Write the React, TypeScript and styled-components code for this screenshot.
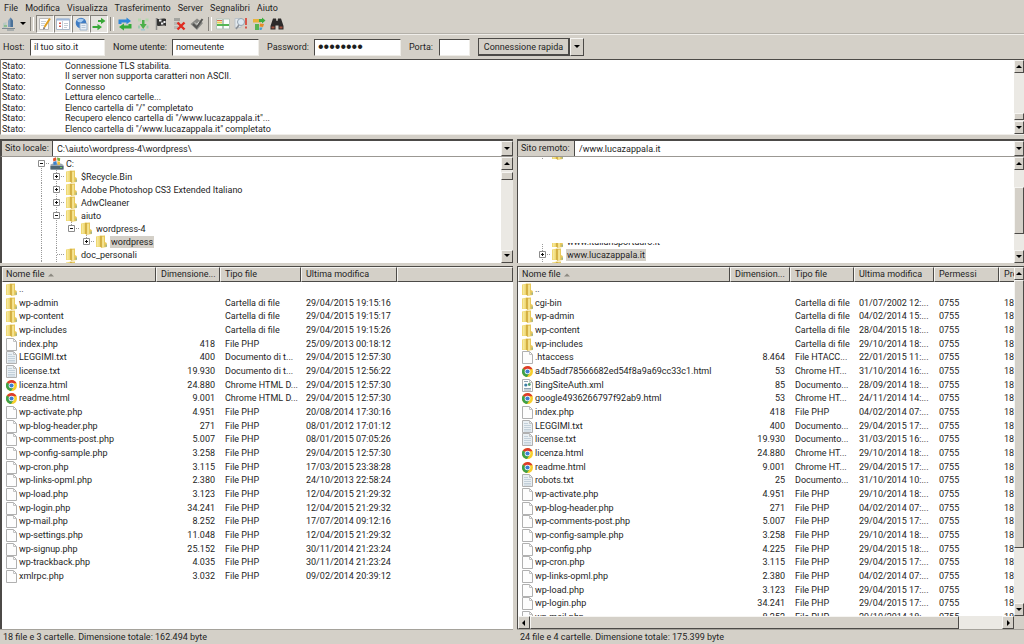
import React from "react";
import styled, { createGlobalStyle, css } from "styled-components";

const face = "#d4d0c8";
const dark = "#4c4a47";
const mid = "#85827c";

const GlobalStyle = createGlobalStyle`
  * { box-sizing: border-box; }
  html, body { margin: 0; padding: 0; }
  body, button, input, select, table {
    font-family: Roboto, Tahoma, sans-serif;
    font-size: 9px;
    color: #1e1e1e;
  }
  button, input, select { margin: 0; padding: 0; border: 0; border-radius: 0; outline: none; }
  svg { display: block; flex: none; }
`;

const raised = css`
  background: ${face};
  border-style: solid;
  border-width: 1px;
  border-color: #f6f5f2 ${dark} ${dark} #f6f5f2;
`;

const Frame = styled.div`
  display: flex;
  flex-direction: column;
  height: 100vh;
  background: ${face};
  overflow: hidden;
  white-space: nowrap;
`;

/* ---------- menu, toolbar, quick connect ---------- */

const MenuBar = styled.nav`
  display: flex;
  flex: none;
  gap: 7px;
  height: 15px;
  padding: 0 4px;
`;

const MenuItem = styled.button`
  background: none;
  line-height: 14px;
`;

const Toolbar = styled.div`
  display: flex;
  flex: none;
  align-items: center;
  height: 19px;
  border-bottom: 1px solid #b3b0a9;
`;

const ToolButton = styled.button<{ $on?: boolean; $w?: number }>`
  display: flex;
  align-items: center;
  justify-content: center;
  width: ${(p) => p.$w ?? 18}px;
  height: 18px;
  background: ${(p) => (p.$on ? "#e6e4df" : "none")};
  ${(p) =>
    p.$on &&
    css`
      border: 1px solid;
      border-color: ${mid} #fff #fff ${mid};
    `}
`;

const ToolSeparator = styled.span`
  width: 8px;
  height: 14px;
  display: flex;
  justify-content: center;
  &::before {
    content: "";
    width: 2px;
    border-left: 1px solid ${mid};
    border-right: 1px solid #fff;
  }
`;

const QuickBar = styled.form`
  display: flex;
  flex: none;
  align-items: center;
  gap: 8px;
  height: 25px;
  padding: 0 3px;
  border-top: 1px solid #f0eeea;
`;

const Field = styled.label<{ $label: number }>`
  display: flex;
  align-items: center;
  & > span { width: ${(p) => p.$label}px; }
`;

const TextBox = styled.input<{ $w: number }>`
  width: ${(p) => p.$w}px;
  height: 17px;
  padding: 0 3px;
  background: #fff;
  border: 1px solid;
  border-color: ${dark} #efede8 #efede8 ${dark};
  &[type="password"] {
    font-family: "Liberation Sans", sans-serif;
    font-size: 16px;
  }
`;

const SplitButton = styled.div`
  display: flex;
`;

const ConnectButton = styled.button`
  ${raised}
  width: 92px;
  height: 18px;
  border-color: ${dark};
  border-right-width: 2px;
  border-bottom-width: 2px;
`;

const ArrowButton = styled.button<{ $w?: number; $h?: number }>`
  ${raised}
  display: flex;
  flex: none;
  align-items: center;
  justify-content: center;
  width: ${(p) => p.$w ?? 12}px;
  height: ${(p) => p.$h ?? 13}px;
`;

/* ---------- message log ---------- */

const LogPane = styled.section`
  display: flex;
  flex: none;
  height: 76px;
  border-top: 1px solid ${dark};
  border-bottom: 1px solid #f0eeea;
  border-left: 1px solid ${mid};
  background: #fff;
`;

const LogList = styled.ul`
  flex: 1;
  min-width: 0;
  margin: 0;
  padding: 1px 0 0 1px;
  list-style: none;
`;

const LogRow = styled.li`
  display: flex;
  height: 10px;
  line-height: 10px;
  &:nth-child(even) { height: 11px; }
  & > span { width: 63px; }
`;

/* ---------- panes ---------- */

const Panes = styled.main`
  display: grid;
  flex: 1;
  min-height: 0;
  grid-template-columns: minmax(0, 513fr) minmax(0, 507fr);
  column-gap: 4px;
  padding-top: 4px;
`;

const Pane = styled.section`
  display: flex;
  flex-direction: column;
  min-width: 0;
  min-height: 0;
`;

const Sunken = styled.div<{ $edge: number }>`
  display: flex;
  min-height: 0;
  background: #fff;
  border-left: ${(p) => p.$edge}px solid ${dark};
`;

const AddressBar = styled(Sunken)`
  flex: none;
  height: 18px;
  border-top: 2px solid ${dark};
  border-bottom: 1px solid #9b9893;
`;

const AddressLabel = styled.label<{ $w: number }>`
  width: ${(p) => p.$w}px;
  padding-left: 3px;
  background: ${face};
  border-right: 1px solid ${dark};
  line-height: 15px;
`;

const AddressSelect = styled.select`
  appearance: none;
  flex: 1;
  min-width: 0;
  padding: 0 4px;
  background: #fff;
`;

const TreeBox = styled(Sunken)`
  flex: none;
  height: 106px;
`;

const TreeList = styled.ul<{ $indent: number }>`
  display: flex;
  flex-direction: column;
  flex: 1;
  min-width: 0;
  margin: 0;
  padding: 0 0 0 ${(p) => p.$indent}px;
  overflow: hidden;
  list-style: none;
`;

const TreeRow = styled.li`
  display: flex;
  flex: none;
  align-items: center;
  height: 13px;
`;

const TreeClip = styled.li<{ $h: number; $top?: boolean }>`
  display: flex;
  flex: none;
  align-items: ${(p) => (p.$top ? "flex-start" : "flex-end")};
  height: ${(p) => p.$h}px;
  overflow: hidden;
  & > div { display: flex; flex: none; align-items: center; height: 13px; }
`;

const TreeGap = styled.li`
  flex: 1;
`;

const TreeLabel = styled.span<{ $selected?: boolean }>`
  padding: 0 1px;
  line-height: 12px;
  background: ${(p) => (p.$selected ? face : "none")};
`;

const IconCell = styled.span`
  display: flex;
  justify-content: center;
  width: 16px;
`;

/* ---------- scroll bars ---------- */

const VScroll = styled.div<{ $w: number }>`
  display: flex;
  flex: 1 0 auto;
  flex-direction: column;
  width: ${(p) => p.$w}px;
  background: #ebe9e4;
`;

const ScrollColumn = styled.div`
  display: flex;
  flex: none;
  flex-direction: column;
`;

const Corner = styled.div`
  flex: none;
  height: 13px;
  background: ${face};
`;

const HScroll = styled.div`
  display: flex;
  flex: none;
  height: 13px;
  background: #ebe9e4;
`;

const Space = styled.div<{ $grow: number }>`
  flex: ${(p) => p.$grow} 1 0;
`;

const Thumb = styled.div<{ $grow: number }>`
  ${raised}
  flex: ${(p) => p.$grow} 1 0;
`;

/* ---------- file tables ---------- */

const ListBox = styled(Sunken)`
  flex: 1;
  margin-top: 3px;
  border-top: 1px solid ${dark};
`;

const ListColumn = styled.div`
  display: flex;
  flex: 1;
  flex-direction: column;
  min-width: 0;
  min-height: 0;
`;

const TableClip = styled.div`
  flex: 1;
  min-height: 0;
  overflow: hidden;
`;

const FileTable = styled.table`
  width: 100%;
  table-layout: fixed;
  border-collapse: separate;
  border-spacing: 0;

  th, td {
    padding: 0 0 0 5px;
    overflow: hidden;
    font-weight: normal;
    text-align: left;
  }
  th {
    ${raised}
    height: 15px;
    padding-left: 4px;
    line-height: 13px;
  }
  th:first-child { padding-left: 3px; }
  td:first-child { padding-left: 4px; }
  td { line-height: 13px; }
  tbody tr { height: 14px; }
  tbody tr:nth-child(3n) { height: 13px; }
  td:nth-child(2) { padding: 0 5px 0 0; text-align: right; }
`;

const NameCell = styled.span`
  display: flex;
  align-items: center;
  height: 13px;
  gap: 1px;
`;

const SortHead = styled.span`
  display: flex;
  align-items: center;
  gap: 4px;
  height: 13px;
`;

const Status = styled.footer`
  flex: none;
  height: 15px;
  padding-left: 3px;
  border-top: 1px solid #a5a29b;
  line-height: 15px;
`;

/* ---------- drawings ---------- */

const Arrow = ({ dir = "down" }: { dir?: "up" | "down" | "left" | "right" }) => {
  const d = { down: "M1 2h6L4 5z", up: "M1 5h6L4 2z", left: "M5 1v6L2 4z", right: "M3 1v6l3-3z" }[dir];
  return <svg width="8" height="8" viewBox="0 0 8 8"><path d={d} fill="#000" /></svg>;
};

const FolderIcon = () => (
  <svg width="12" height="13" viewBox="0 0 12 13">
    <path d="M0 1.500L5 .5v11.500H0z" fill="#efd873" />
    <path d="M1 1.500h1.500v10H1z" fill="#f6e79c" />
    <path d="M4.500 .8L9 .5v6.500l1.800 1v4L5.500 12.800l-1-1z" fill="#e8c95c" />
    <path d="M4.300 1l1.300-.3v12l-1.300-1z" fill="#c9a336" />
    <path d="M6.300 2l1.500-.2v10L6.300 12.200z" fill="#f8ea9f" />
    <path d="M9.700 9.500h1v2.300h-1z" fill="#7fa596" />
  </svg>
);

const PageIcon = ({ kind }: { kind: "file" | "text" | "xml" }) => (
  <svg width="12" height="13" viewBox="0 0 12 13">
    <path d="M.5.5H7.500L10.500 3.500v9H.5z" fill={kind === "text" ? "#e9eff3" : "#fdfdfd"} stroke="#b0b0b0" />
    <path d="M7.500.5v3h3" fill="none" stroke="#c2c2c2" />
    {kind === "text" && <path d="M2 3.500h4M2 5.500h7M2 7.500h7M2 9.500h7M2 11h7" stroke="#c3d0da" />}
    {kind === "xml" && (
      <g>
        <path d="M2 9.500h7M2 11h7M2 2.500h4" stroke="#8fa3b4" />
        <circle cx="3.800" cy="6" r="1.600" fill="#3c7fa6" />
        <circle cx="7.300" cy="5.500" r="1.400" fill="#4d9a6e" />
      </g>
    )}
  </svg>
);

const ChromeIcon = () => (
  <svg width="12" height="13" viewBox="0 0 12 13">
    <circle cx="5.500" cy="6.500" r="5.500" fill="#f7cf2c" />
    <path d="M5.500 6.500L.8 3.600A5.500 5.500 0 0 1 10.500 4.200H5.500z" fill="#dd3a2c" />
    <path d="M5.500 6.500L.8 3.600A5.500 5.500 0 0 0 5 12L7.800 7.800z" fill="#3ea04a" />
    <circle cx="5.500" cy="6.500" r="2.800" fill="#fff" />
    <circle cx="5.500" cy="6.500" r="2.100" fill="#3d7fd0" />
  </svg>
);

const DriveIcon = () => (
  <svg width="14" height="13" viewBox="0 0 14 13">
    <path d="M0.500 7.500l2.500-1h8l2.500 1.500v4.500H.5z" fill="#9aa7b0" />
    <path d="M.5 9h13v3.500H.5z" fill="#4d6673" />
    <path d="M10 10h2v1h-2z" fill="#6fd05b" />
    <path d="M3 1.500l3-1.200.5 3.200-3.200.9z" fill="#e0572c" />
    <path d="M7 .5l3.200.8-.3 3-2.500-.7z" fill="#78b13c" />
    <path d="M3.200 5l3.200-.9.500 3.400-3.300.6z" fill="#3d83cc" />
    <path d="M7.300 4.200l2.700.6-.3 3.300-2.200-.6z" fill="#f3bd32" />
  </svg>
);

type NodeMark = "plus" | "minus" | "none";

const Guide = ({ line }: { line: boolean }) => (
  <svg width="15" height="13" viewBox="0 0 15 13">
    {line && <path d="M7.500 0v13" stroke="#9a9a9a" strokeDasharray="1 1" />}
  </svg>
);

const Expander = ({ mark, up = true, down = true }: { mark: NodeMark; up?: boolean; down?: boolean }) => (
  <svg width="15" height="13" viewBox="0 0 15 13">
    {up && <path d="M7.500 0v6" stroke="#9a9a9a" strokeDasharray="1 1" />}
    {down && <path d="M7.500 7v6" stroke="#9a9a9a" strokeDasharray="1 1" />}
    <path d="M8 6.500h7" stroke="#9a9a9a" strokeDasharray="1 1" />
    {mark !== "none" && (
      <g>
        <path d="M4.500 3.500h6v6h-6z" fill="#fff" stroke="#8c8c8c" />
        <path d="M6 6.500h3" stroke="#111" />
        {mark === "plus" && <path d="M7.500 5v3" stroke="#111" />}
      </g>
    )}
  </svg>
);

const SortMark = () => (
  <svg width="6" height="4" viewBox="0 0 6 4"><path d="M0 3.500l3-3L6 3.500z" fill="#8b8880" /></svg>
);

const toolIcons: Record<string, React.ReactNode> = {
  server: (
    <g>
      <path d="M1 6l3.500-1v6H1z" fill="#b9c9c4" />
      <path d="M2 8h3v2H2z" fill="#8dbf8f" />
      <path d="M6 3.500L8.500.5 11 3.500V10H6z" fill="#7d9dbb" />
      <path d="M8.500.5L11 3.500V10H8.500z" fill="#4a7198" />
      <path d="M0 11.500h13M5 13h7" stroke="#7d8a92" />
    </g>
  ),
  edit: (
    <g>
      <path d="M1.500 1.500h9v11h-9z" fill="#fff" stroke="#b9b9b9" />
      <path d="M3 4.500h5M3 6.500h4M3 8.500h3" stroke="#c9d1d8" />
      <path d="M12 1.500L6.500 10" stroke="#e0a020" strokeWidth="2" />
      <path d="M5.300 12.500l.3-2.500 1.700 1z" fill="#443322" />
    </g>
  ),
  tree: (
    <g>
      <path d="M.5 2h13v10.500H.5z" fill="#fff" stroke="#a9b7c8" />
      <path d="M.5 1.500h13v2H.5z" fill="#9db6d8" />
      <path d="M6.500 4v8" stroke="#c3ccd6" />
      <path d="M3 5.500h2v1.500H3zM3 8.500h2V10H3z" fill="#d5564c" />
      <path d="M8 6.500h4M8 8.500h4M8 10.500h3" stroke="#c3ccd3" />
    </g>
  ),
  globe: (
    <g>
      <circle cx="7" cy="6" r="5.300" fill="#3f7cc4" />
      <path d="M3 3.200c2-2 5-2 7-.5L7 5.500 4 5z" fill="#a9cdf0" />
      <path d="M6 6.500h7v6.500H6z" fill="#e9eff7" stroke="#9db3cc" />
      <path d="M7.500 8.500h4M7.500 10.500h4" stroke="#b5c5d6" />
    </g>
  ),
  queue: (
    <g fill="#38a838">
      <path d="M6 3h3V.8L13.500 4 9 7V5H6z" />
      <path d="M0.500 9h5V7L10 10l-4.500 3.200V11h-5z" />
    </g>
  ),
  refresh: (
    <g>
      <path d="M0.500 7V2.500h8V.5l4.500 3.500-4.500 3.200V5.500H3.500V7z" fill="#2f86d8" />
      <path d="M13.500 7v4.500H6v2L1 10l5-3.500v2h4.500V7z" fill="#35ab3a" />
    </g>
  ),
  process: (
    <g>
      <path d="M2 1.500h3v3H2zM9.500 1.500h3v3h-3z" fill="#b5d8ae" />
      <path d="M6 3h2.500v4h2.200L7.200 12 3.700 7H6z" fill="#4bb04a" />
      <path d="M2 8.500h2v3H2zM10.500 8.500h2v3h-2z" fill="#9fcbb1" />
      <path d="M5 12h4v1.500H5z" fill="#9fc7d3" />
    </g>
  ),
  flag: (
    <g>
      <path d="M2.500 1v12" stroke="#8a8a88" strokeWidth="1.500" />
      <path d="M3 1.500c3 1.500 5-1 9 .5v7c-4-1.500-6 1-9-.5z" fill="#333" />
      <path d="M5 2.500h2.500v2H5zM9.500 4h2v2h-2zM7 5.500h2.300v2H7z" fill="#efefef" />
    </g>
  ),
  cancel: (
    <g>
      <path d="M2 1h6v3H2z" fill="#a3a39e" />
      <path d="M2 5h6v3H2zM2 9h4v3H2z" fill="#b9b9b4" />
      <path d="M5.500 5.500l7 7M12.500 5.500l-7 7" stroke="#e02b20" strokeWidth="2.400" />
    </g>
  ),
  check: (
    <g>
      <path d="M0.500 7L7 1.500 13 6l-6 7z" fill="#8a8a86" />
      <path d="M3 7l3.500 3.500L12.500 2" fill="none" stroke="#555553" strokeWidth="2" />
      <path d="M5 5.500l2 2 2-3" fill="none" stroke="#deded9" />
    </g>
  ),
  filter: (
    <g>
      <path d="M.5 2h6v10h-6zM7.500 2h6v10h-6z" fill="#fbfcfb" stroke="#b5c5bb" />
      <path d="M1 3.500h5" stroke="#e36b54" />
      <path d="M1 5.500h5" stroke="#e7cf58" strokeWidth="2" />
      <path d="M1 8h12" stroke="#54b655" strokeWidth="2" />
    </g>
  ),
  search: (
    <g>
      <path d="M1 1.500h6v9H1z" fill="#e3e8ec" stroke="#bcc3c9" />
      <circle cx="7" cy="5" r="3.500" fill="#dce8f1" stroke="#95a2ae" />
      <path d="M5 8l-3 4" stroke="#8a8f95" strokeWidth="1.500" />
      <path d="M12 1v7M12 9.500v2" stroke="#d94a3e" strokeWidth="1.800" />
    </g>
  ),
  sync: (
    <g>
      <path d="M1 2h8v3.500H1z" fill="#e8b23a" />
      <path d="M7 2h3V.5L13.500 3.500 10 6.500V5H7z" fill="#3fae3f" />
      <path d="M3 7h4v6H3z" fill="#57b452" />
      <path d="M8 6.500l4 .5-1 3-3.500-.5z" fill="#e58c27" />
      <path d="M7.500 10.500h3l-1 2.500h-2z" fill="#4aa0cf" />
    </g>
  ),
  binoculars: (
    <g>
      <path d="M3 1.500h3l.5 2.500h1L8 1.500h3L13.500 9v3.500H8.500v-4h-3v4H.5V9z" fill="#2c2a2a" />
      <path d="M1.500 9.500h3v2h-3zM9.500 9.500h3v2h-3z" fill="#a5523f" />
    </g>
  ),
};

const ToolIcon = ({ name }: { name: string }) => (
  <svg width="14" height="14" viewBox="0 0 14 14">{toolIcons[name]}</svg>
);

/* ---------- data ---------- */

const log = [
  "Connessione TLS stabilita.",
  "Il server non supporta caratteri non ASCII.",
  "Connesso",
  "Lettura elenco cartelle...",
  'Elenco cartella di "/" completato',
  'Recupero elenco cartella di "/www.lucazappala.it"...',
  'Elenco cartella di "/www.lucazappala.it" completato',
];

type TreeNode = { label: string; guides: boolean[]; mark: NodeMark; selected?: boolean; drive?: boolean; last?: boolean };

const localTree: TreeNode[] = [
  { label: "C:", guides: [], mark: "minus", drive: true },
  { label: "$Recycle.Bin", guides: [true], mark: "plus" },
  { label: "Adobe Photoshop CS3 Extended Italiano", guides: [true], mark: "plus" },
  { label: "AdwCleaner", guides: [true], mark: "plus" },
  { label: "aiuto", guides: [true], mark: "minus" },
  { label: "wordpress-4", guides: [true, true], mark: "minus", last: true },
  { label: "wordpress", guides: [true, true, false], mark: "plus", selected: true, last: true },
  { label: "doc_personali", guides: [true], mark: "none" },
  { label: "", guides: [true], mark: "none" },
];

type FileRow = string[];

const localFiles: FileRow[] = [
  ["d", "..", "", "", ""],
  ["d", "wp-admin", "", "Cartella di file", "29/04/2015 19:15:16"],
  ["d", "wp-content", "", "Cartella di file", "29/04/2015 19:15:17"],
  ["d", "wp-includes", "", "Cartella di file", "29/04/2015 19:15:26"],
  ["f", "index.php", "418", "File PHP", "25/09/2013 00:18:12"],
  ["t", "LEGGIMI.txt", "400", "Documento di t...", "29/04/2015 12:57:30"],
  ["t", "license.txt", "19.930", "Documento di t...", "29/04/2015 12:56:22"],
  ["c", "licenza.html", "24.880", "Chrome HTML D...", "29/04/2015 12:57:30"],
  ["c", "readme.html", "9.001", "Chrome HTML D...", "29/04/2015 12:57:30"],
  ["f", "wp-activate.php", "4.951", "File PHP", "20/08/2014 17:30:16"],
  ["f", "wp-blog-header.php", "271", "File PHP", "08/01/2012 17:01:12"],
  ["f", "wp-comments-post.php", "5.007", "File PHP", "08/01/2015 07:05:26"],
  ["f", "wp-config-sample.php", "3.258", "File PHP", "29/04/2015 12:57:30"],
  ["f", "wp-cron.php", "3.115", "File PHP", "17/03/2015 23:38:28"],
  ["f", "wp-links-opml.php", "2.380", "File PHP", "24/10/2013 22:58:24"],
  ["f", "wp-load.php", "3.123", "File PHP", "12/04/2015 21:29:32"],
  ["f", "wp-login.php", "34.241", "File PHP", "12/04/2015 21:29:32"],
  ["f", "wp-mail.php", "8.252", "File PHP", "17/07/2014 09:12:16"],
  ["f", "wp-settings.php", "11.048", "File PHP", "12/04/2015 21:29:32"],
  ["f", "wp-signup.php", "25.152", "File PHP", "30/11/2014 21:23:24"],
  ["f", "wp-trackback.php", "4.035", "File PHP", "30/11/2014 21:23:24"],
  ["f", "xmlrpc.php", "3.032", "File PHP", "09/02/2014 20:39:12"],
];

const remote = (icon: string, name: string, size: string, type: string, date: string): FileRow => [
  icon, name, size, type, date, "0755", "18",
];

const remoteFiles: FileRow[] = [
  ["d", "..", "", "", "", "", ""],
  remote("d", "cgi-bin", "", "Cartella di file", "01/07/2002 12:..."),
  remote("d", "wp-admin", "", "Cartella di file", "04/02/2014 15:..."),
  remote("d", "wp-content", "", "Cartella di file", "28/04/2015 18:..."),
  remote("d", "wp-includes", "", "Cartella di file", "29/10/2014 18:..."),
  remote("f", ".htaccess", "8.464", "File HTACC...", "22/01/2015 11:..."),
  remote("c", "a4b5adf78566682ed54f8a9a69cc33c1.html", "53", "Chrome HT...", "31/10/2014 16:..."),
  remote("x", "BingSiteAuth.xml", "85", "Documento...", "28/09/2014 18:..."),
  remote("c", "google4936266797f92ab9.html", "53", "Chrome HT...", "24/11/2014 14:..."),
  remote("f", "index.php", "418", "File PHP", "04/02/2014 07:..."),
  remote("t", "LEGGIMI.txt", "400", "Documento...", "29/04/2015 17:..."),
  remote("t", "license.txt", "19.930", "Documento...", "31/03/2015 16:..."),
  remote("c", "licenza.html", "24.880", "Chrome HT...", "29/10/2014 18:..."),
  remote("c", "readme.html", "9.001", "Chrome HT...", "29/04/2015 17:..."),
  remote("t", "robots.txt", "25", "Documento...", "31/10/2014 10:..."),
  remote("f", "wp-activate.php", "4.951", "File PHP", "29/10/2014 18:..."),
  remote("f", "wp-blog-header.php", "271", "File PHP", "04/02/2014 07:..."),
  remote("f", "wp-comments-post.php", "5.007", "File PHP", "29/04/2015 17:..."),
  remote("f", "wp-config-sample.php", "3.258", "File PHP", "29/10/2014 18:..."),
  remote("f", "wp-config.php", "4.225", "File PHP", "29/04/2015 18:..."),
  remote("f", "wp-cron.php", "3.115", "File PHP", "29/04/2015 17:..."),
  remote("f", "wp-links-opml.php", "2.380", "File PHP", "04/02/2014 07:..."),
  remote("f", "wp-load.php", "3.123", "File PHP", "29/04/2015 17:..."),
  remote("f", "wp-login.php", "34.241", "File PHP", "29/04/2015 17:..."),
  remote("f", "wp-mail.php", "8.252", "File PHP", "29/10/2014 18:..."),
];

const fileIcon = (k: string) =>
  k === "d" ? <FolderIcon /> : k === "c" ? <ChromeIcon /> : <PageIcon kind={k === "t" ? "text" : k === "x" ? "xml" : "file"} />;

/* ---------- composed parts ---------- */

const Files = ({ heads, widths, rows }: { heads: string[]; widths: number[]; rows: FileRow[] }) => (
  <TableClip>
    <FileTable>
      <colgroup>
        {heads.map((_, i) => <col key={i} width={widths[i]} />)}
      </colgroup>
      <thead>
        <tr>
          {heads.map((h, i) => (
            <th key={i} scope="col">{i === 0 ? <SortHead>{h}<SortMark /></SortHead> : h}</th>
          ))}
        </tr>
      </thead>
      <tbody>
        {rows.map(([icon, name, ...rest]) => (
          <tr key={name}>
            <td><NameCell>{fileIcon(icon)}{name}</NameCell></td>
            {rest.map((c, i) => <td key={i}>{c}</td>)}
          </tr>
        ))}
      </tbody>
    </FileTable>
  </TableClip>
);

type ScrollProps = { w: number; before: number; thumb: number; after: number; corner?: boolean };

const Scroll = ({ w, before, thumb, after, corner }: ScrollProps) => (
  <ScrollColumn>
    <VScroll $w={w}>
      <ArrowButton $w={w} aria-label="Su"><Arrow dir="up" /></ArrowButton>
      <Space $grow={before} />
      <Thumb $grow={thumb} />
      <Space $grow={after} />
      <ArrowButton $w={w} aria-label="Giù"><Arrow /></ArrowButton>
    </VScroll>
    {corner && <Corner />}
  </ScrollColumn>
);

const Tools = ({ names, on }: { names: string[]; on?: boolean }) => (
  <>
    {names.map((n) => (
      <ToolButton key={n} $on={on} aria-label={n}><ToolIcon name={n} /></ToolButton>
    ))}
  </>
);

export default function App() {
  return (
    <Frame>
      <GlobalStyle />
      <MenuBar>
        {["File", "Modifica", "Visualizza", "Trasferimento", "Server", "Segnalibri", "Aiuto"].map((m) => (
          <MenuItem key={m}>{m}</MenuItem>
        ))}
      </MenuBar>
      <Toolbar>
        <Tools names={["server"]} />
        <ToolButton $w={10} aria-label="Siti"><Arrow /></ToolButton>
        <ToolSeparator />
        <Tools on names={["edit", "tree", "globe", "queue"]} />
        <ToolSeparator />
        <Tools names={["refresh", "process", "flag", "cancel", "check"]} />
        <ToolSeparator />
        <Tools names={["filter", "search", "sync", "binoculars"]} />
      </Toolbar>
      <QuickBar onSubmit={(e) => e.preventDefault()}>
        <Field $label={27}><span>Host:</span><TextBox $w={75} defaultValue="il tuo sito.it" /></Field>
        <Field $label={59}><span>Nome utente:</span><TextBox $w={87} defaultValue="nomeutente" /></Field>
        <Field $label={47}><span>Password:</span><TextBox $w={87} type="password" defaultValue="password" /></Field>
        <Field $label={30}><span>Porta:</span><TextBox $w={31} /></Field>
        <SplitButton>
          <ConnectButton type="submit">Connessione rapida</ConnectButton>
          <ArrowButton type="button" $w={14} $h={18} aria-label="Cronologia"><Arrow /></ArrowButton>
        </SplitButton>
      </QuickBar>

      <LogPane>
        <LogList>
          {log.map((l) => <LogRow key={l}><span>Stato:</span>{l}</LogRow>)}
        </LogList>
        <Scroll w={10} before={43} thumb={5} after={1} />
      </LogPane>

      <Panes>
        <Pane>
          <AddressBar $edge={2}>
            <AddressLabel $w={51} htmlFor="local">Sito locale:</AddressLabel>
            <AddressSelect id="local"><option>C:\aiuto\wordpress-4\wordpress\</option></AddressSelect>
            <ArrowButton $h={15} aria-label="Apri"><Arrow /></ArrowButton>
          </AddressBar>
          <TreeBox $edge={2}>
            <TreeList $indent={32}>
              {localTree.map((n) => (
                <TreeRow key={n.label}>
                  {n.guides.map((g, i) => <Guide key={i} line={g} />)}
                  <Expander mark={n.mark} up={!n.drive} down={!n.last} />
                  <IconCell>{n.drive ? <DriveIcon /> : <FolderIcon />}</IconCell>
                  <TreeLabel $selected={n.selected}>{n.label}</TreeLabel>
                </TreeRow>
              ))}
            </TreeList>
            <Scroll w={12} before={2} thumb={6} after={71} />
          </TreeBox>
          <ListBox $edge={2}>
            <ListColumn>
              <Files
                heads={["Nome file", "Dimensione...", "Tipo file", "Ultima modifica", ""]}
                widths={[154, 64, 81, 96]}
                rows={localFiles}
              />
            </ListColumn>
          </ListBox>
          <Status>18 file e 3 cartelle. Dimensione totale: 162.494 byte</Status>
        </Pane>

        <Pane>
          <AddressBar $edge={1}>
            <AddressLabel $w={57} htmlFor="remote">Sito remoto:</AddressLabel>
            <AddressSelect id="remote"><option>/www.lucazappala.it</option></AddressSelect>
            <ArrowButton $w={10} $h={15} aria-label="Apri"><Arrow /></ArrowButton>
          </AddressBar>
          <TreeBox $edge={1}>
            <TreeList $indent={17}>
              <TreeClip $h={3}>
                <div><Expander mark="none" /><IconCell><FolderIcon /></IconCell></div>
              </TreeClip>
              <TreeGap />
              <TreeClip $h={5}>
                <div>
                  <Expander mark="none" />
                  <IconCell><FolderIcon /></IconCell>
                  <TreeLabel>www.italiansportauro.it</TreeLabel>
                </div>
              </TreeClip>
              <TreeRow>
                <Expander mark="plus" />
                <IconCell><FolderIcon /></IconCell>
                <TreeLabel $selected>www.lucazappala.it</TreeLabel>
              </TreeRow>
              <TreeClip $h={2} $top>
                <div><Expander mark="none" /><IconCell><FolderIcon /></IconCell></div>
              </TreeClip>
            </TreeList>
            <Scroll w={10} before={17} thumb={46} after={16} />
          </TreeBox>
          <ListBox $edge={1}>
            <ListColumn>
              <Files
                heads={["Nome file", "Dimension...", "Tipo file", "Ultima modifica", "Permessi", "Pro"]}
                widths={[212, 60, 64, 80, 65, 60]}
                rows={remoteFiles}
              />
              <HScroll>
                <ArrowButton aria-label="Sinistra"><Arrow dir="left" /></ArrowButton>
                <Thumb $grow={428} />
                <Space $grow={43} />
                <ArrowButton aria-label="Destra"><Arrow dir="right" /></ArrowButton>
              </HScroll>
            </ListColumn>
            <Scroll w={10} before={0} thumb={266} after={55} corner />
          </ListBox>
          <Status>24 file e 4 cartelle. Dimensione totale: 175.399 byte</Status>
        </Pane>
      </Panes>
    </Frame>
  );
}
